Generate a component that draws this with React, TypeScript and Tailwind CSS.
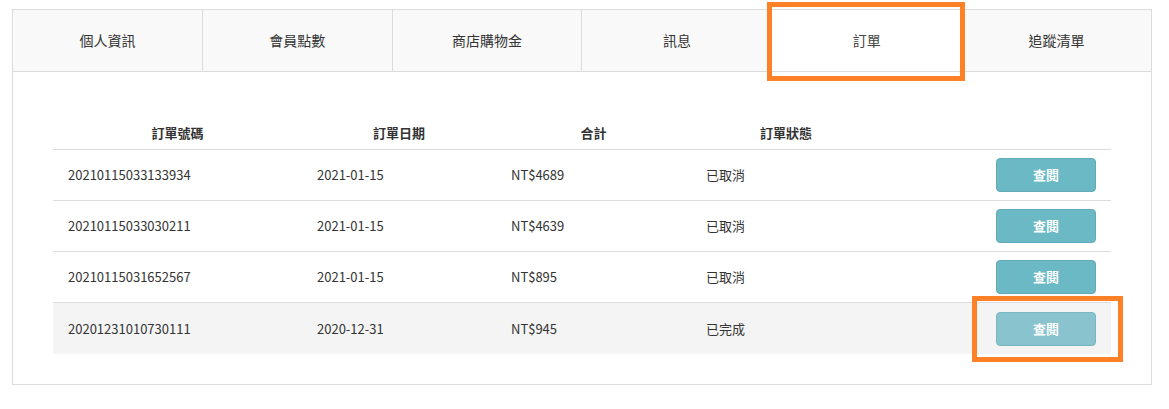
import { useState } from "react";

const TABS = ["個人資訊", "會員點數", "商店購物金", "訊息", "訂單", "追蹤清單"];

interface Order {
  id: string;
  date: string;
  total: string;
  status: string;
}

const ORDERS: Order[] = [
  { id: "20210115033133934", date: "2021-01-15", total: "NT$4689", status: "已取消" },
  { id: "20210115033030211", date: "2021-01-15", total: "NT$4639", status: "已取消" },
  { id: "20210115031652567", date: "2021-01-15", total: "NT$895", status: "已取消" },
  { id: "20201231010730111", date: "2020-12-31", total: "NT$945", status: "已完成" },
];

const COLS = "grid grid-cols-[249px_194px_195px_190px_1fr]";

export default function App() {
  const [active] = useState("訂單");
  const [hovered] = useState(3);

  return (
    <div
      className="relative w-[1169px] h-[409px] pt-[9px] bg-white text-[#333]"
      style={{ fontFamily: '"Noto Sans CJK TC", "Noto Sans", sans-serif' }}
    >
      <div className="ml-3 w-[1140px] border border-[#dcdcdc]">
        {/* tabs */}
        <div className="flex h-[62px] border-b border-[#dcdcdc]">
          {TABS.map((t, i) => (
            <div
              key={t}
              className={
                "flex-1 flex items-center justify-center text-[14px] " +
                (i > 0 ? "border-l border-[#dcdcdc] " : "") +
                (t === active ? "bg-white text-[#444]" : "bg-[#f9f9f9] text-[#333]")
              }
            >
              {t}
            </div>
          ))}
        </div>

        {/* orders */}
        <div className="px-10 pt-[44px] pb-[30px]">
          <div className={`${COLS} h-[34px] items-center border-b border-[#dcdcdc] text-[13px] font-bold`}>
            <div className="text-center">訂單號碼</div>
            <div className="text-center">訂單日期</div>
            <div className="text-center">合計</div>
            <div className="text-center">訂單狀態</div>
            <div />
          </div>
          {ORDERS.map((o, i) => (
            <div
              key={o.id}
              className={
                `${COLS} h-[51px] items-center text-[13px] ` +
                (i < ORDERS.length - 1 ? "border-b border-[#dcdcdc] " : "") +
                (i === hovered ? "bg-[#f4f4f4]" : "")
              }
            >
              <div className="pl-[15px]">{o.id}</div>
              <div className="pl-[15px]">{o.date}</div>
              <div className="pl-[15px]">{o.total}</div>
              <div className="pl-[15px]">{o.status}</div>
              <div className="flex justify-end pr-[15px]">
                <button
                  className={
                    "w-[100px] h-[34px] rounded-[4px] border text-white text-[13px] font-bold " +
                    (i === hovered
                      ? "bg-[#89c4ce] border-[#7ab6c1]"
                      : "bg-[#6cb9c6] border-[#62aab7]")
                  }
                >
                  查閱
                </button>
              </div>
            </div>
          ))}
        </div>
      </div>

      {/* annotation boxes */}
      <div className="absolute left-[767px] top-[2px] w-[198px] h-[79px] border-[5px] border-[#fe8127]" />
      <div className="absolute left-[972px] top-[296px] w-[151px] h-[66px] border-[5px] border-[#fe8127]" />
    </div>
  );
}
